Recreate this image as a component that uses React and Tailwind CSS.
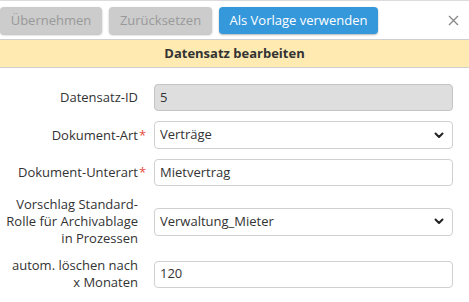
import React from "react";

const Chevron = () => (
  <svg width="10" height="7" viewBox="0 0 10 7" className="shrink-0">
    <path d="M1.5 1.5 L5 5 L8.5 1.5" fill="none" stroke="#222" strokeWidth="2" strokeLinecap="round" strokeLinejoin="round" />
  </svg>
);

function Row({ label, required, children }) {
  return (
    <div className="flex items-center py-[5px]">
      <div className="w-[138px] shrink-0 text-right leading-[17px] text-[#333]">{label}</div>
      <div className="w-[9px] shrink-0 text-center text-[#e74c3c] leading-[17px]">{required ? "*" : ""}</div>
      <div className="ml-[7px] mr-[16px] flex-1">{children}</div>
    </div>
  );
}

function Input({ value, disabled }) {
  return (
    <div
      className={
        "flex h-[27px] items-center rounded-[4px] border px-[5px] text-[#333] " +
        (disabled ? "border-[#c4c4c4] bg-[#dedede]" : "border-[#d0d0d0] bg-white")
      }
    >
      {value}
    </div>
  );
}

function Select({ value }) {
  return (
    <div className="flex h-[28px] items-center justify-between rounded-[4px] border border-[#d0d0d0] bg-white pl-[5px] pr-[8px] text-[#333]">
      <span>{value}</span>
      <Chevron />
    </div>
  );
}

export default function App() {
  return (
    <div
      className="w-[469px] h-[302px] overflow-hidden bg-white border-t border-[#dcdcdc] text-[13px]"
      style={{ fontFamily: '"Open Sans", "Liberation Sans", sans-serif' }}
    >
      <div className="flex h-[38px] items-center pt-[1px]">
        <div className="flex gap-[7px]">
          <button className="h-[27px] w-[102px] rounded-[4px] bg-[#cccccc] text-[#999] shadow-[0_1px_2px_rgba(0,0,0,0.3)]">
            Übernehmen
          </button>
          <button className="h-[27px] w-[103px] rounded-[4px] bg-[#cccccc] text-[#999] shadow-[0_1px_2px_rgba(0,0,0,0.3)]">
            Zurücksetzen
          </button>
          <button className="h-[27px] w-[159px] rounded-[4px] bg-[#3498db] text-white shadow-[0_1px_2px_rgba(0,0,0,0.3)]">
            Als Vorlage verwenden
          </button>
        </div>
        <div className="ml-auto mr-[6px] flex h-[20px] w-[20px] items-center justify-center">
          <svg width="11" height="11" viewBox="0 0 11 11">
            <path d="M1 1 L10 10 M10 1 L1 10" stroke="#8a8a8a" strokeWidth="1.4" />
          </svg>
        </div>
      </div>
      <div className="flex h-[29px] items-center justify-center border-y border-[#cfcfcf] bg-[#ffeab2] font-bold text-[#333]">
        Datensatz bearbeiten
      </div>
      <div className="pt-[11px]">
        <Row label="Datensatz-ID">
          <Input value="5" disabled />
        </Row>
        <Row label="Dokument-Art" required>
          <Select value="Verträge" />
        </Row>
        <Row label="Dokument-Unterart" required>
          <Input value="Mietvertrag" />
        </Row>
        <Row label={<>Vorschlag Standard-<br />Rolle für Archivablage<br />in Prozessen</>}>
          <Select value="Verwaltung_Mieter" />
        </Row>
        <Row label={<>autom. löschen nach<br />x Monaten</>}>
          <Input value="120" />
        </Row>
      </div>
    </div>
  );
}
